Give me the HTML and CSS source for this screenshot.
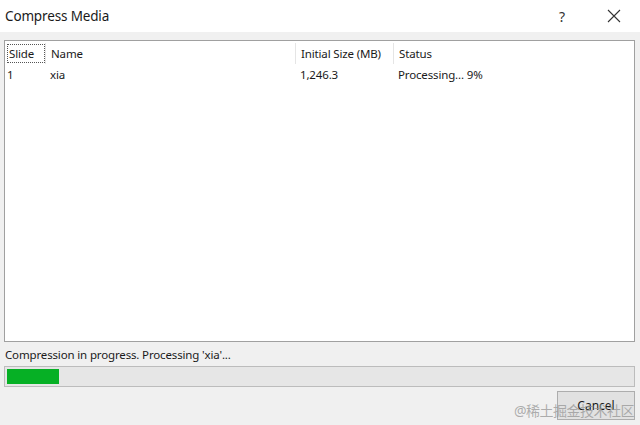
FILE: index.html
```html
<!DOCTYPE html>
<html>
<head>
<meta charset="utf-8">
<link rel="stylesheet" href="styles.css">
</head>
<body>
<div class="dialog">
  <div class="titlebar">
    <div class="title">Compress Media</div>
    <div class="help">?</div>
    <div class="close">
      <svg width="14" height="14" viewBox="0 0 14 14"><path d="M1 1 L13 13 M13 1 L1 13" stroke="#333" stroke-width="1.1" fill="none"/></svg>
    </div>
  </div>
  <div class="body">
    <div class="listbox">
      <div class="row header">
        <div class="cell c1"><span class="focus">Slide</span></div>
        <div class="cell c2 sep">Name</div>
        <div class="cell c3 sep">Initial Size (MB)</div>
        <div class="cell c4 sep">Status</div>
      </div>
      <div class="row">
        <div class="cell c1">1</div>
        <div class="cell c2">xia</div>
        <div class="cell c3">1,246.3</div>
        <div class="cell c4">Processing... 9%</div>
      </div>
    </div>
    <div class="status">Compression in progress. Processing 'xia'...</div>
    <div class="progress"><div class="fill" style="width:52px"></div></div>
    <div class="actions">
      <button class="btn">Cancel</button>
    </div>
  </div>
  <div class="watermark">@稀土掘金技术社区</div>
</div>
</body>
</html>
```
FILE: styles.css
```css
* { box-sizing: border-box; }
html, body { margin: 0; padding: 0; }
body {
  width: 640px;
  height: 425px;
  overflow: hidden;
  background: #f0f0f0;
  font-family: "Noto Sans", "Noto Sans CJK SC", sans-serif;
  font-size: 11.5px;
  letter-spacing: -0.15px;
  color: #1a1a1a;
}
.dialog { position: relative; width: 640px; height: 425px; }
.titlebar {
  height: 32px;
  background: #fff;
  display: flex;
  align-items: center;
}
.title {
  flex: 1;
  padding-left: 5px;
  font-size: 13.5px;
  color: #1a1a1a;
}
.help {
  width: 20px;
  margin-right: 32px;
  text-align: center;
  font-size: 14px;
  color: #333;
}
.close {
  width: 20px;
  margin-right: 16px;
  display: flex;
  justify-content: center;
}
.body { padding: 8px 5px 0 4px; }
.listbox {
  height: 302px;
  background: #fff;
  border: 1px solid #a0a0a0;
  padding-top: 2px;
}
.row {
  display: grid;
  grid-template-columns: 40px 250px 98px 1fr;
  height: 21px;
  align-items: center;
}
.cell { padding-left: 5px; white-space: nowrap; height: 100%; display: flex; align-items: center; }
.c1 { padding-left: 2px; }
.header .sep { border-left: 1px solid #e5e5e5; }
.focus {
  display: inline-flex;
  align-items: center;
  width: 38px;
  height: 19px;
  padding: 0 1px;
  border: 1px dotted #555;
}
.status {
  height: 24px;
  padding: 5px 0 0 1px;
  line-height: 16px;
}
.progress {
  height: 21px;
  border: 1px solid #bcbcbc;
  background: #e6e6e6;
  padding: 2px;
}
.fill { height: 15px; background: #06b025; }
.actions {
  display: flex;
  justify-content: flex-end;
  padding-top: 4px;
}
.btn {
  width: 78px;
  height: 29px;
  background: #e1e1e1;
  border: 1px solid #adadad;
  font-family: inherit;
  font-size: 12px;
  color: #1a1a1a;
  padding: 0;
}
.watermark {
  position: absolute;
  right: 6px;
  bottom: 5px;
  font-size: 14px;
  letter-spacing: -0.5px;
  color: rgba(150,150,150,0.75);
}
```
